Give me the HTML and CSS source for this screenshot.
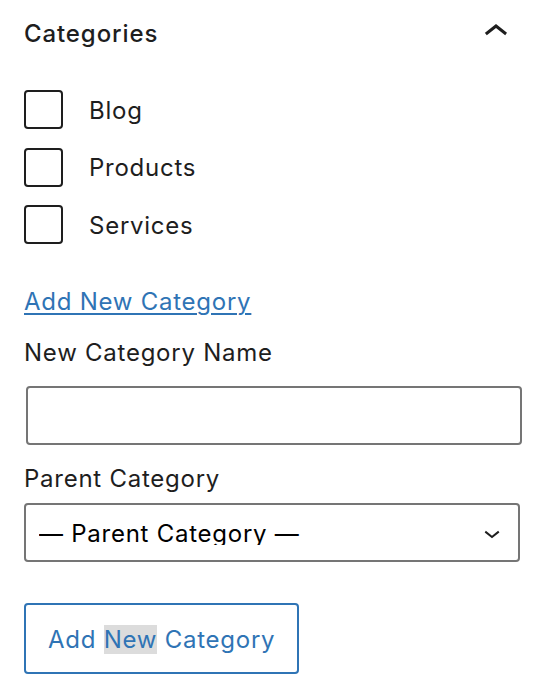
FILE: index.html
```html
<!DOCTYPE html>
<html lang="en">
<head>
    <meta charset="UTF-8">
    <meta name="viewport" content="width=device-width, initial-scale=1.0">
    <title>Categories</title>
    <link rel="stylesheet" href="styles.css">
</head>
<body>
    <div class="panel">
        <div class="panel-header">
            <h2 class="panel-title">Categories</h2>
            <svg class="toggle-icon" width="48" height="48" viewBox="0 0 24 24" aria-hidden="true">
                <path d="M6.5 12.4L12 8l5.5 4.4-.9 1.2L12 10l-4.6 3.6-1-1.2z"></path>
            </svg>
        </div>

        <div class="cat-list">
            <label class="cat-item"><input type="checkbox" class="checkbox"> Blog</label>
            <label class="cat-item"><input type="checkbox" class="checkbox"> Products</label>
            <label class="cat-item"><input type="checkbox" class="checkbox"> Services</label>
        </div>

        <p class="add-link"><a href="#">Add New Category</a></p>

        <label class="field-label" for="cat-name">New Category Name</label>
        <input type="text" id="cat-name" class="text-input">

        <label class="field-label parent-label">Parent Category</label>
        <div class="select">
            <span class="select-value">— Parent Category —</span>
            <svg class="select-icon" width="32" height="32" viewBox="0 0 24 24" aria-hidden="true">
                <path d="M17.5 11.6L12 16l-5.5-4.4.9-1.2L12 14l4.6-3.6 1 1.2z"></path>
            </svg>
        </div>

        <button class="add-button">Add <span class="selected">New</span> Category</button>
    </div>
</body>
</html>
```

FILE: styles.css
```css
body {
    margin: 0;
    font-family: Inter, "Noto Sans", sans-serif;
    font-size: 24px;
    line-height: 32px;
    letter-spacing: 0.75px;
    color: #1e1e1e;
    background-color: #fff;
}

.panel {
    padding: 0 24px;
}

.panel-header {
    display: flex;
    justify-content: space-between;
    align-items: center;
    height: 66px;
}

.panel-title {
    margin: 2px 0 0;
    font-size: 24px;
    font-weight: 500;
    letter-spacing: 0.9px;
}

.toggle-icon {
    fill: #1e1e1e;
    margin-bottom: 3px;
}

.cat-list {
    display: flex;
    flex-direction: column;
    gap: 18.5px;
    margin-top: 24px;
}

.cat-item {
    display: flex;
    align-items: center;
    gap: 26px;
    padding-top: 2px;
}

.checkbox {
    appearance: none;
    width: 39px;
    height: 39px;
    margin: -2px 0 0;
    box-sizing: border-box;
    border: 2px solid #1e1e1e;
    border-radius: 4px;
    background-color: #fff;
}

.add-link {
    margin: 42px 0 0;
}

.add-link a {
    color: #2f74b5;
    text-decoration-thickness: 2px;
    text-underline-offset: 3px;
}

.field-label {
    display: block;
    margin-top: 19px;
}

.text-input {
    display: block;
    width: 496px;
    height: 59px;
    box-sizing: border-box;
    margin: 17px 0 0 2px;
    border: 2px solid #757575;
    border-radius: 4px;
    font: inherit;
}

.parent-label {
    margin-top: 18px;
}

.select {
    display: flex;
    justify-content: space-between;
    align-items: center;
    height: 59px;
    box-sizing: border-box;
    margin-top: 8px;
    padding: 0 13px;
    border: 2px solid #757575;
    border-radius: 4px;
    color: #000;
}

.select-value {
    height: 27px;
    overflow: hidden;
    margin-bottom: 2px;
}

.select-icon {
    fill: #1e1e1e;
    margin-right: -3px;
}

.add-button {
    display: block;
    height: 71px;
    margin-top: 41px;
    padding: 2px 22px 0;
    border: 2px solid #2f74b5;
    border-radius: 4px;
    background-color: #fff;
    color: #2f74b5;
    font: inherit;
    letter-spacing: inherit;
}

.selected {
    background-color: #dcdcdc;
}
```
